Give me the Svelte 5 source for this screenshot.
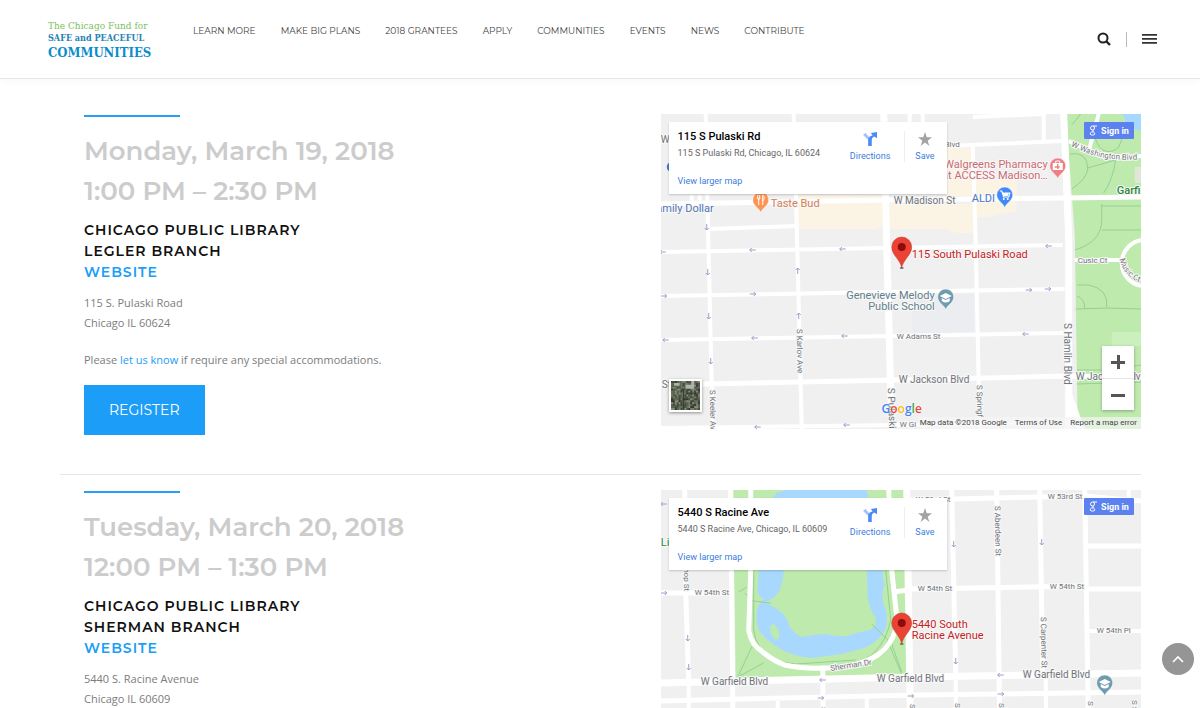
<script>
  const navItems = [
    'Learn More',
    'Make Big Plans',
    '2018 Grantees',
    'Apply',
    'Communities',
    'Events',
    'News',
    'Contribute'
  ];

  const meetings = [
    {
      id: 'legler',
      date: 'Monday, March 19, 2018',
      time: '1:00 PM – 2:30 PM',
      branch: 'Legler Branch',
      street: '115 S. Pulaski Road',
      city: 'Chicago IL 60624',
      place: '115 S Pulaski Rd',
      placeAddress: '115 S Pulaski Rd, Chicago, IL 60624'
    },
    {
      id: 'sherman',
      date: 'Tuesday, March 20, 2018',
      time: '12:00 PM – 1:30 PM',
      branch: 'Sherman Branch',
      street: '5440 S. Racine Avenue',
      city: 'Chicago IL 60609',
      place: '5440 S Racine Ave',
      placeAddress: '5440 S Racine Ave, Chicago, IL 60609'
    }
  ];

  // One-way arrows: x, y, rotation (0 points right)
  const arrows = {
    legler: [
      [46, 113, 90], [2, 138, 180], [92, 136, 180], [182, 135, 180], [388, 132, 180],
      [47, 158, 90], [137, 157, 270], [3, 182, 0], [92, 180, 0], [368, 176, 0], [387, 175, 0],
      [48, 202, 90], [138, 202, 270], [5, 226, 180], [94, 224, 180], [184, 222, 180], [365, 220, 180],
      [50, 247, 90], [97, 313, 180], [186, 311, 180]
    ],
    sherman: [
      [3, 14, 180], [3, 103, 0], [27, 148, 90], [28, 177, 90], [162, 190, 180], [160, 208, 0],
      [250, 206, 0], [293, 54, 90], [381, 52, 90], [295, 171, 90], [340, 185, 180], [340, 204, 0]
    ]
  };

  // Rooftops and trees for the satellite thumbnail
  const tileColors = ['#3d4a3a', '#59634f', '#7b7d6c', '#2e382f', '#8f8c7c', '#4c5545', '#66705c'];
  const tiles = [];
  for (let row = 0; row < 15; row++) {
    for (let col = 0; col < 15; col++) {
      tiles.push({
        x: col * 2,
        y: row * 2,
        fill: tileColors[(row * row * 5 + col * 11 + row * col * 3 + ((row ^ col) % 5)) % tileColors.length]
      });
    }
  }

  function scrollToTop() {
    window.scrollTo({ top: 0, behavior: 'smooth' });
  }
</script>

{#snippet marker()}
  <g transform="translate(241 154)">
    <ellipse cx="0" cy="0" rx="2" ry="1" fill="#777" />
    <path d="M0 0C-1-8-10-13-10-21a10 10 0 0 1 20 0C10-13 1-8 0 0z" fill="#ea4335" stroke="#c5352b" stroke-width="0.5" />
    <circle cx="0" cy="-21" r="4" fill="#8c0d0b" />
  </g>
{/snippet}

{#snippet pin(x, y, color, kind)}
  <g transform="translate({x} {y})">
    <path d="M0 0C-1-5-8-7-8-13a8 8 0 0 1 16 0C8-7 1-5 0 0z" fill={color} stroke="#fff" stroke-width="0.5" />
    {#if kind === 'food'}
      <path d="M-3-18v4M-1-18v4M-2-14v6M2-8v-10c2 1 2 4 0 6M-3-14h2" stroke="#fff" stroke-width="1" fill="none" />
    {:else if kind === 'pharmacy'}
      <path d="M-5-16H5v7H-5z" fill="#fff" />
      <path d="M-2-16v-2h4v2" stroke="#fff" fill="none" />
      <path d="M0-15v5M-3-12h5" stroke={color} stroke-width="1.4" />
    {:else if kind === 'shop'}
      <path d="M-5-17h2l2 6h5l1-4h-7" stroke="#fff" stroke-width="1.2" fill="none" />
      <path d="M-2-15h6l-1 3h-4z" fill="#fff" />
      <circle cx="-1" cy="-9" r="1" fill="#fff" />
      <circle cx="3" cy="-9" r="1" fill="#fff" />
    {:else}
      <path d="M-6-14l6-3 6 3-6 3z" fill="#fff" />
      <path d="M-4-12v3q4 3 8 0v-3l-4 2z" fill="#fff" />
    {/if}
  </g>
{/snippet}

{#snippet leglerMap()}
  <g fill="#fbf4e4">
    <path d="M137 81h88v30l-10 4h-78zM229 90h83v29h-15l-12-4h-56zM286 34h25v48h-25zM314 66h42v31l-28 6h-14z" />
  </g>
  <path d="M251 180h62v39h-62z" fill="#ebedf1" />
  <path d="M405 0h76v315h-64l-3-195z" fill="#bfeaae" />
  <path d="M462 0h19v17l-14-4z" fill="#a8d8fd" />
  <path d="M474 53h7v16h-7z" fill="#dfe8d8" />
  <path d="M451 218h30v14h-30z" fill="#cbefbd" />
  <g class="trail">
    <path d="M420 0l-9 11M438 0c-4 14-6 22-1 30 6 11 16 8 21 3l6-15M409 40q18-3 18 15-1 10-16 20M427 54l28-8q-3 20-12 33M413 26l15 11M441 90v16q0 22-27 30M441 92h40M441 116h40M416 171h12q20 4 18 22M415 195l31-1 35 1M416 182q8 2 8 13M416 256h30l35-5M416 270l65-2" />
  </g>
  <!-- Streets -->
  <g class="street minor">
    <path d="M45 0l2 100 5 215M133 0l4 150 4 165M312 32l3 100 4 183M383 0v29M249 0v14M262 0v20" />
    <path d="M312 3l71-3M286 32l116-5M48 115l88-3M0 138l226-4 176-3M0 182l226-4 178-3M0 226l231-4 173-3M0 314l402-5M31 81v11M39 81v11" />
    <path d="M408 27q18 10 34 13 20 4 39 2M428 37l10-37M414 146h48" />
    <circle cx="484" cy="149" r="23" fill="none" />
  </g>
  <g class="street">
    <path d="M0 90l228-4 174-2 79-1M0 271l238-5 166-4 77 1" />
  </g>
  <g class="street major">
    <path d="M223 0l3 130 5 185M403 0l5 125v190M407 278q8 22 14 40" />
  </g>
  <g class="label">
    <text x="0" y="29">W</text>
    <text x="233" y="90">W Madison St</text>
    <text x="238" y="269">W Jackson Blvd</text>
    <text x="415" y="266">W Jackson Blvd</text>
    <text x="1" y="274">St</text>
    <text transform="translate(403 209) rotate(90)">S Hamlin Blvd</text>
    <text transform="translate(227 274) rotate(88)">S Pulaski</text>
  </g>
  <g class="label small">
    <text x="299" y="33" text-anchor="end">W Washington Blvd</text>
    <path id="washington" d="M410 32q18 9 34 12 20 3 40 1" />
    <text><textPath href="#washington">W Washington Blvd</textPath></text>
    <text x="236" y="225">W Adams St</text>
    <text x="239" y="313">W Gl</text>
    <text x="417" y="149">Cusic Ct</text>
    <path id="music-court" d="M459 145q4 18 22 24" />
    <text><textPath href="#music-court">Music Ct</textPath></text>
    <text transform="translate(136 215) rotate(89)">S Karlov Ave</text>
    <text transform="translate(49 276) rotate(89)">S Keeler Ave</text>
    <text transform="translate(316 271) rotate(89)">S Springf</text>
  </g>
  <g class="place">
    <text x="53" y="98" text-anchor="end" fill="#5276b4">Family Dollar</text>
    <text x="110" y="93" fill="#d77d57">Taste Bud</text>
    <text x="387" y="54" text-anchor="end" fill="#cb6a70">Walgreens Pharmacy</text>
    <text x="387" y="65" text-anchor="end" fill="#cb6a70">at ACCESS Madison…</text>
    <text x="311" y="88" fill="#4a79c9">ALDI</text>
    <text x="274" y="185" text-anchor="end" fill="#62808c">Genevieve Melody</text>
    <text x="274" y="196" text-anchor="end" fill="#62808c">Public School</text>
    <text class="strong" x="456" y="80" fill="#2e8540">Garfi</text>
    <text x="251" y="144" fill="#c5221f">115 South Pulaski Road</text>
  </g>
  <circle cx="11" cy="53" r="5" fill="#4a79c9" />
  {@render pin(100, 99, '#fb9557', 'food')}
  {@render pin(397, 65, '#ee7f83', 'pharmacy')}
  {@render pin(344, 94, '#4189f4', 'shop')}
  {@render pin(285, 196, '#6f9bae', 'school')}
{/snippet}

{#snippet shermanMap()}
  <path d="M72 0h173l3 184-173 5z" fill="#bfeaae" />
  <path d="M112 8l4-5 10-3h80l2 7-20 5h-70z" fill="#a8d8fd" />
  <path
    d="M98 80h25q-1 20-10 28-5 3-10 4 16 6 24 18 2 12 14 17 12-3 24-3 12 3 22 2 10-4 22-6 8-4 6-12-7-10-8-22l-1-26h16q0 10 2 14-4 10-1 20 5 12 2 24-6 14-22 20-10 3-22 6-16 2-28 4-22-1-38-12-12-8-17-16-4-12-1-22 2-8 7-9-8-3-7-10z"
    fill="#a8d8fd"
  />
  <ellipse cx="114" cy="142" rx="4" ry="8" transform="rotate(-20 114 142)" fill="#bfeaae" />
  <g class="trail">
    <path d="M93 80v60q2 20 22 31l20 3 60-4M225 80l5 50q-4 20-16 32-8 8-20 10M77 187l14-30M77 187l26-14M211 134l20 20 10 28M241 184l-12-28M84 103l8 8 18 2M78 102l8-5" />
  </g>
  <!-- Streets -->
  <g class="street">
    <path d="M90 0v80l-2 61q3 14 14 21 11 9 22 13 20 4 38 3 32 1 55-13 14-10 18-26l1-12-5-47-3-80" />
    <path d="M24 0l1 103 3 90M70 0l3 315M291 0l4 186M336 0l4 315M379 0l3 182M424 0l5 315M162 178l1 137" />
    <path d="M250 10l174-4 57 5M0 103h70M233 102l14-2M250 99l176-3M427 99h54M427 56h54M0 211l255-6 226-3" />
  </g>
  <g class="street minor">
    <path d="M428 141h53M468 0v12M117 211v104M206 208v107M28 193v122M295 190v125M385 186l1 129M0 250l481-6M0 285l481-6" />
  </g>
  <g class="street major">
    <path d="M0 193l255-6 226-4M246 0l5 315" />
  </g>
  <g class="label">
    <text x="40" y="195">W Garfield Blvd</text>
    <text x="216" y="192">W Garfield Blvd</text>
    <text x="362" y="188">W Garfield Blvd</text>
  </g>
  <g class="label small">
    <text x="34" y="105">W 54th St</text>
    <text x="257" y="101">W 54th St</text>
    <text x="389" y="99">W 54th St</text>
    <text x="387" y="9">W 53rd St</text>
    <text x="255" y="12">W 53rd St</text>
    <text x="436" y="143">W 54th Pl</text>
    <text transform="translate(170 181) rotate(-9)">Sherman Dr</text>
    <text transform="translate(23 101) rotate(90)" text-anchor="end">S Bishop St</text>
    <text transform="translate(334 16) rotate(89)">S Aberdeen St</text>
    <text transform="translate(380 127) rotate(89)">S Carpenter St</text>
    <text transform="translate(249 214) rotate(90)">S Racine Ave</text>
    <text transform="translate(294 213) rotate(90)">S May St</text>
    <text transform="translate(338 213) rotate(90)">S Aberdeen St</text>
    <text transform="translate(427 211) rotate(90)">S Morgan St</text>
    <text transform="translate(471 210) rotate(90)">S Sangamon St</text>
    <text transform="translate(160 217) rotate(90)">S Throop St</text>
  </g>
  <g class="place">
    <text x="0" y="56" fill="#2e8540">Li</text>
    <text x="251" y="138" fill="#c5221f">5440 South</text>
    <text x="251" y="149" fill="#c5221f">Racine Avenue</text>
  </g>
  {@render pin(444, 206, '#6f9bae', 'school')}
{/snippet}

<header class="site-header">
  <a class="logo" href="#home">
    <span class="logo-fund">The Chicago Fund for</span>
    <span class="logo-safe">SAFE and PEACEFUL</span>
    <span class="logo-communities">COMMUNITIES</span>
  </a>

  <nav class="main-nav">
    {#each navItems as item}
      <a href="#{item.toLowerCase().replaceAll(' ', '-')}">{item}</a>
    {/each}
  </nav>

  <div class="tools">
    <button class="tool" aria-label="Search">
      <svg width="14" height="14" viewBox="0 0 14 14" fill="none" stroke="#222">
        <circle cx="6" cy="6" r="4.5" stroke-width="2" />
        <path d="M9.5 9.5L13 13" stroke-width="2.4" />
      </svg>
    </button>
    <span class="tool-divider"></span>
    <button class="tool" aria-label="Menu">
      <svg width="15" height="10" viewBox="0 0 15 10" fill="#333">
        <path d="M0 0h15v1.700H0zM0 4h15v1.700H0zM0 8h15v1.700H0z" />
      </svg>
    </button>
  </div>
</header>

<main>
  {#each meetings as meeting}
    <section class="meeting">
      <div class="details">
        <div class="accent"></div>
        <h2>{meeting.date}<br />{meeting.time}</h2>
        <h3>
          Chicago Public Library<br />
          {meeting.branch}<br />
          <a href="#{meeting.id}-website">Website</a>
        </h3>
        <p>{meeting.street}<br />{meeting.city}</p>
        <p>Please <a href="#contact">let us know</a> if require any special accommodations.</p>
        <a class="register" href="#{meeting.id}-register">Register</a>
      </div>

      <div class="map">
        <svg class="map-canvas" viewBox="0 0 481 315" preserveAspectRatio="xMidYMid slice">
          <rect width="481" height="315" fill="#f0f0f0" />
          {#if meeting.id === 'legler'}
            {@render leglerMap()}
          {:else}
            {@render shermanMap()}
          {/if}
          {#each arrows[meeting.id] as [x, y, angle]}
            <path class="arrow" d="M-3 0h6M1-2l2 2-2 2" transform="translate({x} {y}) rotate({angle})" />
          {/each}
          {@render marker()}
        </svg>

        <div class="place-card">
          <div class="place-text">
            <strong>{meeting.place}</strong>
            <span>{meeting.placeAddress}</span>
            <a href="#{meeting.id}-map">View larger map</a>
          </div>
          <a class="place-action" href="#{meeting.id}-directions">
            <svg width="16" height="16" viewBox="0 0 16 16">
              <path d="M0 3l3-2 5 6v8H6V9z" fill="#a1c2fa" />
              <path d="M6 16V9q0-4 5-5L9 1l7-1v7l-3-2q-3 1-3 4v7z" fill="#4a8af4" />
            </svg>
            Directions
          </a>
          <a class="place-action save" href="#{meeting.id}-save">
            <svg width="16" height="16" viewBox="0 0 16 16" fill="#a3a3a3">
              <path d="M8 0l2 6h6l-5 4 2 6-5-4-5 4 2-6-5-4h6z" />
            </svg>
            Save
          </a>
        </div>

        <a class="sign-in" href="#sign-in">
          <svg width="8" height="11" viewBox="0 0 8 11" fill="none" stroke="#fff">
            <circle cx="3.5" cy="3" r="2" />
            <path d="M4 1h4M4.500 5q-2 1 0 2 2 1 1 2.500-2 1.500-4 0-1-1.500 1-2.500h2" />
          </svg>
          Sign in
        </a>

        {#if meeting.id === 'legler'}
          <button class="satellite" aria-label="Show satellite imagery">
            <svg viewBox="0 0 30 30">
              {#each tiles as tile}
                <rect x={tile.x} y={tile.y} width="2" height="2" fill={tile.fill} />
              {/each}
              <path d="M3 2h6v3H3zM15 4h9v4h-9zM21 0h3v6h-3z" fill="#aeb3ab" />
              <path d="M13 8v22" stroke="#2d372d" />
            </svg>
          </button>
        {:else}
          <button class="satellite" aria-label="Show satellite imagery"></button>
        {/if}

        <div class="google" aria-label="Google">
          <span class="blue">G</span><span class="red">o</span><span class="yellow">o</span><span class="blue">g</span><span class="green">l</span><span class="red">e</span>
        </div>

        <div class="zoom">
          <button aria-label="Zoom in">
            <svg width="14" height="14" viewBox="0 0 14 14"><path d="M0 6h6V0h3v6h5v3H9v5H6V9H0z" /></svg>
          </button>
          <button aria-label="Zoom out">
            <svg width="14" height="14" viewBox="0 0 14 14"><path d="M0 6h14v3H0z" /></svg>
          </button>
        </div>

        <div class="map-legal">
          <span>Map data ©2018 Google</span>
          <a href="#terms">Terms of Use</a>
          <a href="#report">Report a map error</a>
        </div>
      </div>
    </section>
  {/each}
</main>

<button class="to-top" aria-label="Back to top" onclick={scrollToTop}>
  <svg width="12" height="8" viewBox="0 0 12 8" fill="none" stroke="#fff" stroke-width="1.6">
    <path d="M1 7l5-5 5 5" />
  </svg>
</button>

<style>
  :global(body) {
    margin: 0;
    background: #fff;
    color: #7c7c7c;
    font-family: 'Open Sans', sans-serif;
    font-size: 11px;
    line-height: 20px;
  }

  a {
    color: #1b9df8;
    text-decoration: none;
  }

  button {
    padding: 0;
    border: none;
    background: none;
    cursor: pointer;
  }

  svg {
    display: block;
  }

  .site-header {
    display: flex;
    align-items: flex-start;
    height: 78px;
    padding: 0 43px 0 48px;
    border-bottom: 1px solid #e6e6e6;
    box-shadow: 0 2px 8px rgba(0, 0, 0, 0.03);
  }

  .logo {
    display: flex;
    flex-direction: column;
    width: 145px;
    padding-top: 20px;
    font-family: 'DejaVu Serif Condensed', 'DejaVu Serif', serif;
    white-space: nowrap;
  }

  .logo-fund {
    color: #7cc05a;
    font-size: 10px;
    line-height: 12px;
  }

  .logo-safe {
    color: #2382b4;
    font-size: 9px;
    font-weight: bold;
    line-height: 12px;
  }

  .logo-communities {
    color: #0b8dcb;
    font-size: 13px;
    font-weight: bold;
    line-height: 18px;
  }

  .main-nav {
    display: flex;
    flex: 1;
    gap: 25px;
    padding-top: 21px;
  }

  .main-nav a {
    color: #444;
    font-family: Montserrat, Inter, sans-serif;
    font-size: 9px;
    text-transform: uppercase;
    white-space: nowrap;
  }

  .tools {
    display: flex;
    align-items: center;
    gap: 15px;
    height: 78px;
  }

  .tool-divider {
    width: 1px;
    height: 15px;
    background: #bbb;
  }

  main {
    padding: 35px 59px 40px 60px;
  }

  .meeting {
    display: grid;
    grid-template-columns: 5fr 4fr;
    padding-bottom: 39px;
  }

  .meeting + .meeting {
    padding-top: 15px;
    border-top: 1px solid #e6e6e6;
  }

  .details {
    padding: 1px 24px 0;
  }

  .accent {
    width: 96px;
    height: 2px;
    background: #2a9df4;
  }

  h2 {
    margin: 14px 0 9px;
    color: #ccc;
    font-family: Montserrat, Inter, sans-serif;
    font-size: 26px;
    font-weight: 600;
    line-height: 40px;
  }

  h3 {
    margin: 0 0 10px;
    color: #111;
    font-family: Montserrat, Inter, sans-serif;
    font-size: 14px;
    font-weight: 600;
    letter-spacing: 1px;
    line-height: 21px;
    text-transform: uppercase;
  }

  p {
    margin: 0 0 17px;
  }

  .register {
    display: inline-block;
    margin-top: -2px;
    padding: 15px 25px;
    background: #1b9df8;
    color: #fff;
    font-family: Montserrat, Inter, sans-serif;
    font-size: 14px;
    text-transform: uppercase;
  }

  /* Map */
  .map {
    position: relative;
    height: 315px;
    overflow: hidden;
    font-family: Roboto, sans-serif;
  }

  .map-canvas {
    width: 100%;
    height: 100%;
  }

  .street {
    fill: none;
    stroke: #fff;
    stroke-width: 5;
  }

  .street.minor {
    stroke-width: 4;
  }

  .street.major {
    stroke-width: 7;
  }

  .trail {
    fill: none;
    stroke: #96cf92;
    stroke-width: 1;
  }

  .arrow {
    fill: none;
    stroke: #9a9fc4;
    stroke-width: 1;
  }

  .label {
    fill: #70757a;
    stroke: #f8f8f8;
    stroke-width: 2;
    paint-order: stroke;
    font-size: 10px;
  }

  .label.small {
    font-size: 8px;
  }

  .label path {
    fill: none;
    stroke: none;
  }

  .place {
    stroke: #f8f8f8;
    stroke-width: 2;
    paint-order: stroke;
    font-size: 11px;
  }

  .strong {
    font-weight: 500;
  }

  .place-card {
    position: absolute;
    top: 8px;
    left: 8px;
    display: flex;
    box-sizing: border-box;
    width: 278px;
    height: 72px;
    padding: 9px 0 0 9px;
    background: #fff;
    box-shadow: 0 1px 2px rgba(0, 0, 0, 0.2);
    font-size: 9px;
    white-space: nowrap;
  }

  .place-card a {
    color: #3a7de0;
  }

  .place-text {
    display: flex;
    flex: 1;
    flex-direction: column;
    line-height: 12px;
  }

  .place-text strong {
    color: #000;
    font-size: 11px;
    font-weight: 500;
  }

  .place-text span {
    margin: 4px 0 16px;
    color: #666;
  }

  .place-action {
    display: flex;
    flex-direction: column;
    align-items: center;
    gap: 4px;
    height: 30px;
    padding: 1px 14px 0;
    line-height: 12px;
  }

  .place-action.save {
    padding: 1px 12px 0 10px;
    border-left: 1px solid #eee;
  }

  .sign-in {
    position: absolute;
    top: 8px;
    right: 7px;
    display: flex;
    align-items: center;
    justify-content: center;
    gap: 4px;
    width: 50px;
    height: 17px;
    border-radius: 1px;
    background: #5b82ee;
    color: #fff;
    font-size: 9px;
    font-weight: 700;
  }

  .satellite {
    position: absolute;
    bottom: 17px;
    left: 8px;
    width: 33px;
    height: 33px;
    border: 2px solid #fff;
    background: #59634f;
    box-shadow: 0 1px 3px rgba(0, 0, 0, 0.4);
  }

  .google {
    position: absolute;
    bottom: 12px;
    left: 221px;
    font-family: 'Open Sans', sans-serif;
    font-size: 12px;
    font-weight: 600;
    line-height: 16px;
    text-shadow: 0 0 1px #fff, 0 0 2px #fff;
  }

  .blue {
    color: #4285f4;
  }

  .red {
    color: #ea4335;
  }

  .yellow {
    color: #fbbc05;
  }

  .green {
    color: #34a853;
  }

  .zoom {
    position: absolute;
    right: 7px;
    bottom: 19px;
    display: flex;
    flex-direction: column;
    width: 32px;
    background: #fff;
    box-shadow: 0 1px 3px rgba(0, 0, 0, 0.3);
  }

  .zoom button {
    display: grid;
    place-items: center;
    height: 32px;
    fill: #555;
  }

  .zoom button + button {
    border-top: 1px solid #e6e6e6;
  }

  .map-legal {
    position: absolute;
    right: 0;
    bottom: 0;
    display: flex;
    gap: 8px;
    padding: 0 4px 0 2px;
    background: rgba(245, 245, 245, 0.7);
    font-size: 8px;
    line-height: 12px;
    white-space: nowrap;
  }

  .map-legal span,
  .map-legal a {
    color: #444;
  }

  .to-top {
    position: fixed;
    right: 6px;
    bottom: 33px;
    display: grid;
    place-items: center;
    width: 32px;
    height: 32px;
    border-radius: 50%;
    background: #959595;
  }

  @media (max-width: 900px) {
    .site-header {
      height: auto;
    }

    .main-nav {
      flex-wrap: wrap;
      padding-bottom: 20px;
    }

    .meeting {
      grid-template-columns: 1fr;
      gap: 24px;
    }
  }
</style>
